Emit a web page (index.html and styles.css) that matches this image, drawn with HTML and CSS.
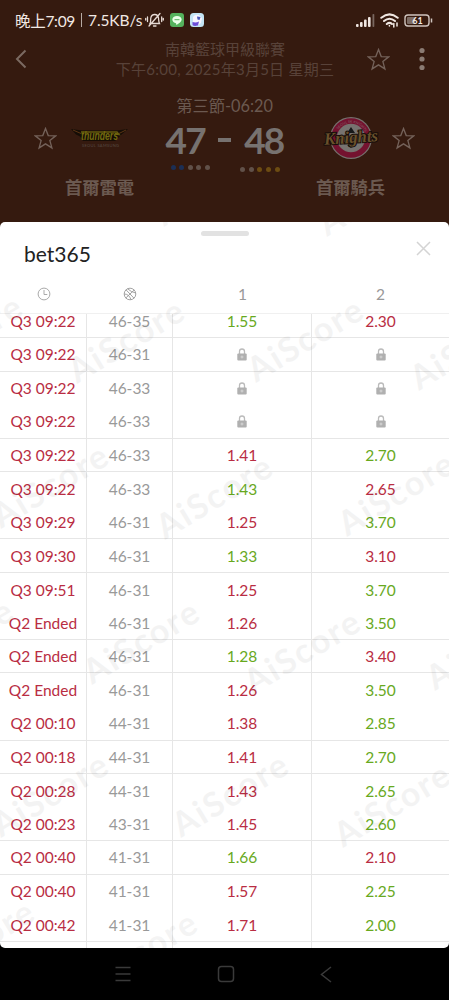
FILE: index.html
```
<!DOCTYPE html>
<html lang="zh-Hant">
<head>
    <meta charset="UTF-8" />
    <meta name="viewport" content="width=device-width, initial-scale=1.0" />
    <title>AiScore - bet365</title>
    <link rel="stylesheet" href="styles.css">
</head>
<body>
<header class="match">
    <div class="statusbar">
        <div class="status-left">
            <span class="clock">晚上7:09</span>
            <span class="divider"></span>
            <span class="speed">7.5KB/s</span>
            <svg class="mute" width="19" height="16" viewBox="0 0 19 16" fill="none" stroke="#e8dcd6" stroke-width="1.3" stroke-linecap="round">
                <path d="M5 11.5C6 10 5.500 8 5.800 6C6.200 3.500 8 2.500 9.800 2.500S13.200 4 13.500 6C13.800 8 13.500 9.500 14.500 11.500Z M8.500 14H11 M4 14L15 1.500 M2.500 5V9.500 M16.700 5V9.500 M.7 6.500V8 M18.300 6.500V8"/>
            </svg>
            <svg class="line-app" width="14" height="14" viewBox="0 0 14 14">
                <rect width="14" height="14" rx="3" fill="#55b25d"/>
                <path d="M7 3C4.200 3 2.300 4.600 2.300 6.600C2.300 8.600 4 9.800 6 10.200L6.400 12C9 10.600 11.700 8.800 11.700 6.600C11.700 4.600 9.800 3 7 3Z" fill="#e9ffe8"/>
                <path d="M4.500 6.700H9.500" stroke="#55b25d"/>
            </svg>
            <svg class="pet-app" width="14" height="14" viewBox="0 0 14 14">
                <rect width="14" height="14" rx="3.500" fill="#c3e4f4"/>
                <path d="M3 4Q5 1 9 2L12 5L11 10L7 13L3 12Z" fill="#f7f5ff"/>
                <path d="M7 3.500L10.500 4L9.500 7L7.500 6.500Z" fill="#4c58b8"/>
                <path d="M2.500 9Q6 10 9 8.500L8 12.500Q4 13.500 2.500 12Z" fill="#6c4ed8"/>
            </svg>
        </div>
        <div class="status-right">
            <svg width="19" height="13" viewBox="0 0 19 13" fill="#f0e7e2">
                <rect x="0" y="10" width="2.600" height="3" rx="1"/>
                <rect x="4" y="8" width="2.600" height="5" rx="1"/>
                <rect x="8" y="5.500" width="2.600" height="7.500" rx="1"/>
                <rect x="12" y="3" width="2.600" height="10" rx="1"/>
                <rect x="16.500" y="0" width="1.800" height="13" rx=".8" fill="#79675f"/>
            </svg>
            <svg width="19" height="15" viewBox="0 0 19 15" fill="none" stroke="#f0e7e2" stroke-width="2" stroke-linecap="round">
                <path d="M1.300 4.800Q9.500 -2 17.700 4.800 M4 8Q9.500 3.500 15 8 M6.800 11Q9.500 8.800 12 11"/>
                <path d="M9.400 12.500V13 M13.800 10.500V14 M17 10V13" stroke-width="1.500"/>
            </svg>
            <svg width="29" height="13" viewBox="0 0 29 13">
                <rect x="1" y="1" width="24" height="11" rx="3" fill="none" stroke="#cfc4be" stroke-width="1.400"/>
                <rect x="3" y="3" width="8" height="7" rx="1" fill="#7d6c64"/>
                <path d="M27.500 4.500V8.500" stroke="#cfc4be" stroke-width="1.500"/>
                <text x="13.500" y="9.800" class="battery-text">61</text>
            </svg>
        </div>
    </div>

    <div class="topbar">
        <svg class="back" width="12" height="20" viewBox="0 0 12 20"><path d="M10.500 1.500L2 10L10.500 18.500" fill="none" stroke="#7b6a61" stroke-width="2"/></svg>
        <div class="league">
            <div>南韓籃球甲級聯賽</div>
            <div class="date">下午6:00, 2025年3月5日 星期三</div>
        </div>
        <svg class="star" viewBox="0 0 22 22"><path d="M11 1.500L13.600 8.200L20.700 8.500L15.200 13L17.100 20L11 16.100L4.900 20L6.800 13L1.300 8.500L8.400 8.200Z"/></svg>
        <svg class="more" width="6" height="24" viewBox="0 0 6 24" fill="#8a7b73"><circle cx="3" cy="3.500" r="2.600"/><circle cx="3" cy="12" r="2.600"/><circle cx="3" cy="20.500" r="2.600"/></svg>
    </div>

    <div class="teams">
        <div class="team home">
            <div class="badge-row">
                <svg class="star" viewBox="0 0 22 22"><path d="M11 1.500L13.600 8.200L20.700 8.500L15.200 13L17.100 20L11 16.100L4.900 20L6.800 13L1.300 8.500L8.400 8.200Z"/></svg>
                <svg width="58" height="44" viewBox="0 0 58 44">
                    <path d="M0 13L11 14.500H46L57 13L50 19L47 22L44 25H12L9 20.500L5 18.500Z" fill="#150d06"/>
                    <path d="M2 14L10 17.500M55 14L48 17.500" stroke="#5c3413"/>
                    <path d="M10 16H46L48 18.500L44 18" fill="none" stroke="#665b0e" stroke-width="1.500"/>
                    <text x="10" y="23.500" class="thunders" textLength="37" lengthAdjust="spacingAndGlyphs">thunders</text>
                    <text x="11" y="31" class="samsung" textLength="37">SEOUL SAMSUNG</text>
                </svg>
            </div>
            <div class="name">首爾雷電</div>
        </div>
        <div class="result">
            <div class="period">第三節-06:20</div>
            <div class="score"><span>47</span><span class="dash"></span><span>48</span></div>
            <div class="fouls">
                <div class="dots"><i class="blue"></i><i class="blue"></i><i></i><i></i><i></i></div>
                <div class="dots right"><i></i><i></i><i class="gold"></i><i class="gold"></i><i class="gold"></i></div>
            </div>
        </div>
        <div class="team away">
            <div class="badge-row">
                <svg width="56" height="44" viewBox="0 0 56 44">
                    <circle cx="28" cy="22" r="21" fill="#76706d"/>
                    <circle cx="28" cy="22" r="17" fill="none" stroke="#74122f" stroke-width="5.500"/>
                    <circle cx="28" cy="22" r="13.500" fill="#777370"/>
                    <path id="arc" d="M12.800 22A15.200 15.200 0 0 1 43.200 22" fill="none"/>
                    <text class="ring-text"><textPath href="#arc" startOffset="9">SEOUL SK KNIGHTS</textPath></text>
                    <path d="M24 17L28 11L32 17ZM24 29L28 32L32 28Z" fill="#17191a"/>
                    <text x="1" y="27" class="knights" textLength="54" lengthAdjust="spacingAndGlyphs" transform="rotate(-4 28 22)">Knights</text>
                </svg>
                <svg class="star" viewBox="0 0 22 22"><path d="M11 1.500L13.600 8.200L20.700 8.500L15.200 13L17.100 20L11 16.100L4.900 20L6.800 13L1.300 8.500L8.400 8.200Z"/></svg>
            </div>
            <div class="name">首爾騎兵</div>
        </div>
    </div>
</header>

<main class="sheet">
    <div class="handle"></div>
    <div class="sheet-title">
        <h1>bet365</h1>
        <svg width="15" height="15" viewBox="0 0 15 15"><path d="M1 1L14 14M14 1L1 14" stroke="#d4d4d4" stroke-width="1.500"/></svg>
    </div>
    <div class="row head">
        <div>
            <svg width="14" height="14" viewBox="0 0 14 14" fill="none" stroke="#aaa"><circle cx="7" cy="7" r="5.900"/><path d="M7 3V7.500H10.300"/></svg>
        </div>
        <div>
            <svg width="14" height="14" viewBox="0 0 14 14" fill="none" stroke="#999" stroke-width=".9"><circle cx="7" cy="7" r="5.800"/><path d="M3 2.800L11 11.200M11.200 3L2.800 11M4.500 1.700Q8 5 12.700 6M1.300 7Q6 7 8 12.700"/></svg>
        </div>
        <div>1</div>
        <div>2</div>
    </div>
    <div class="odds">
        <div class="rows" id="rows"></div>
    </div>
    <svg class="watermark" id="watermark" width="449" height="726" viewBox="0 222 449 726"></svg>
</main>

<nav class="navbar">
    <svg width="16" height="16" viewBox="0 0 16 16"><path d="M.5 1.500H15.500M.5 8H15.500M.5 14.500H15.500"/></svg>
    <svg width="18" height="18" viewBox="0 0 18 18"><rect x="1.500" y="1.500" width="15" height="15" rx="3"/></svg>
    <svg width="12" height="17" viewBox="0 0 12 17"><path d="M11 1L1.500 8.500L11 16"/></svg>
</nav>

<script>
    // [time, score, home odds, away odds, which side went up]
    const odds = [
        ["Q3 09:22", "46-35", "1.55", "2.30", 1],
        ["Q3 09:22", "46-31"],
        ["Q3 09:22", "46-33"],
        ["Q3 09:22", "46-33"],
        ["Q3 09:22", "46-33", "1.41", "2.70", 2],
        ["Q3 09:22", "46-33", "1.43", "2.65", 1],
        ["Q3 09:29", "46-31", "1.25", "3.70", 2],
        ["Q3 09:30", "46-31", "1.33", "3.10", 1],
        ["Q3 09:51", "46-31", "1.25", "3.70", 2],
        ["Q2 Ended", "46-31", "1.26", "3.50", 2],
        ["Q2 Ended", "46-31", "1.28", "3.40", 1],
        ["Q2 Ended", "46-31", "1.26", "3.50", 2],
        ["Q2 00:10", "44-31", "1.38", "2.85", 2],
        ["Q2 00:18", "44-31", "1.41", "2.70", 2],
        ["Q2 00:28", "44-31", "1.43", "2.65", 2],
        ["Q2 00:23", "43-31", "1.45", "2.60", 2],
        ["Q2 00:40", "41-31", "1.66", "2.10", 1],
        ["Q2 00:40", "41-31", "1.57", "2.25", 2],
        ["Q2 00:42", "41-31", "1.71", "2.00", 2],
        ["", "", " ", " ", 0]
    ];

    const lock = `<svg width="10" height="13" viewBox="0 0 10 13"><path d="M2.500 6V3.500A2.500 2.500 0 0 1 7.500 3.500V6" fill="none" stroke="#bbb" stroke-width="1.300"/><rect x=".3" y="5.500" width="9.400" height="7" rx="1" fill="#b0b0b0"/><path d="M5 7.500V10.500M3.500 9H6.500" stroke="#ddd" stroke-width=".8"/></svg>`;

    document.getElementById("rows").innerHTML = odds.map(([time, score, home, away, up]) => `
        <div class="row">
            <div class="time">${time}</div>
            <div class="points">${score}</div>
            <div class="${up === 1 ? "up" : "down"}">${home || lock}</div>
            <div class="${up === 2 ? "up" : "down"}">${away || lock}</div>
        </div>`).join("");

    // background watermark
    const marks = [
        [164, 227], [327, 237], [-85, 380], [77, 384], [256, 383], [419, 391],
        [1, 529], [165, 540], [347, 537], [-94, 684], [92, 685], [253, 695], [435, 691],
        [1, 838], [181, 838], [343, 848], [-73, 985], [90, 996]
    ];
    document.getElementById("watermark").innerHTML = marks.map(([x, y]) =>
        `<text x="${x}" y="${y}" textLength="128" transform="rotate(-31 ${x} ${y})">AiScore</text>`).join("");
</script>
</body>
</html>
```
FILE: styles.css
```
* {
    box-sizing: border-box;
}
body {
    margin: 0;
    width: 449px;
    height: 1000px;
    overflow: hidden;
    display: flex;
    flex-direction: column;
    background-color: #000;
    font-family: Lato, "Noto Sans CJK TC", sans-serif;
}
svg {
    display: block;
    flex: none;
}
.match {
    height: 228px;
    flex: none;
    margin-bottom: -6px;
    background-color: #351a0f;
    color: #6b5950;
}
.statusbar {
    height: 40px;
    padding: 0 16px 0 15px;
    display: flex;
    justify-content: space-between;
    align-items: center;
    color: #f1e8e3;
    font-size: 15.5px;
}
.status-left,
.status-right {
    display: flex;
    align-items: center;
}
.clock {
    width: 60px;
    white-space: nowrap;
    letter-spacing: -0.3px;
}
.divider {
    width: 1px;
    height: 14px;
    margin: 0 6px 0 6px;
    background-color: #b7aaa3;
}
.speed {
    width: 55px;
    white-space: nowrap;
    letter-spacing: -0.1px;
}
.mute {
    margin-left: 2px;
}
.line-app {
    margin-left: 6px;
}
.pet-app {
    margin-left: 6px;
}
.status-right {
    gap: 5px;
}
.battery-text {
    font-size: 9px;
    font-weight: bold;
    text-anchor: middle;
    fill: #f1e8e3;
}
.topbar {
    height: 46px;
    display: flex;
    align-items: center;
    padding: 0 24px 8px 15px;
}
.league {
    flex: 1;
    padding-left: 86px;
    text-align: center;
    font-size: 15px;
    line-height: 20px;
    color: #584239;
    white-space: nowrap;
}
.date {
    letter-spacing: 0.25px;
}
.star {
    width: 23px;
    height: 23px;
    fill: none;
    stroke: #74625a;
    stroke-width: 1.3;
}
.topbar .star {
    margin-left: 30px;
}
.more {
    margin-left: 29px;
}
.teams {
    display: flex;
    justify-content: space-between;
    padding: 0 34px;
}
.team {
    width: 104px;
    padding-top: 30px;
}
.badge-row {
    display: flex;
    align-items: center;
    gap: 14px;
    height: 44px;
}
.away .badge-row {
    justify-content: flex-end;
    gap: 13px;
}
.name {
    margin-top: 15px;
    line-height: 26px;
    font-size: 17.3px;
    font-weight: bold;
    white-space: nowrap;
}
.home .name {
    padding-left: 31px;
}
.away .name {
    padding-left: 5px;
}
.thunders {
    font: italic bold 12px "Liberation Sans", sans-serif;
    fill: #736a0e;
}
.samsung {
    font-size: 4px;
    fill: #574a43;
}
.ring-text {
    font-size: 3.5px;
    fill: #85636a;
}
.knights {
    font: italic bold 17px "Liberation Serif", serif;
    fill: #69502a;
    stroke: #160d0a;
    stroke-width: 2px;
    paint-order: stroke;
}
.result {
    width: 124px;
    padding-top: 7px;
}
.period {
    text-align: center;
    font-size: 16.3px;
    line-height: 26px;
}
.score {
    display: flex;
    justify-content: space-between;
    align-items: center;
    height: 44px;
    margin: 0 3px 2px 3px;
    color: #777270;
    font-size: 37px;
    line-height: 40px;
    font-weight: bold;
    letter-spacing: -1.8px;
}
.score span {
    position: relative;
    top: -1px;
}
.dash {
    width: 13px;
    height: 4px;
    background-color: #777270;
}
.fouls {
    display: flex;
    justify-content: space-between;
    margin: 0 1px 0 8px;
}
.dots {
    display: flex;
    gap: 3.6px;
}
.dots i {
    width: 5px;
    height: 5px;
    border-radius: 50%;
    background-color: #615149;
}
.dots.right {
    padding-top: 2px;
    margin-right: 6px;
}
.dots .blue {
    background-color: #1c2f55;
}
.dots .gold {
    background-color: #6d4c12;
}
.sheet {
    position: relative;
    height: 726px;
    flex: none;
    overflow: hidden;
    display: flex;
    flex-direction: column;
    background-color: #fff;
    border-radius: 5px;
}
.handle {
    width: 48px;
    height: 5px;
    flex: none;
    margin: 9px auto 0;
    border-radius: 3px;
    background-color: #e2e2e2;
}
.sheet-title {
    height: 46px;
    flex: none;
    display: flex;
    justify-content: space-between;
    padding: 5px 18px 0 24px;
}
.sheet-title h1 {
    margin: 0;
    font-size: 21px;
    line-height: 25px;
    font-weight: normal;
    color: #222;
}
.row {
    display: grid;
    grid-template-columns: 87px 86px 139px 137px;
    height: 33.56px;
    font-size: 15.5px;
    border-bottom: 1px solid #e6e6e6;
}
.row > div {
    display: flex;
    align-items: center;
    justify-content: center;
    border-right: 1px solid #e6e6e6;
    white-space: pre;
}
.row > div:last-child {
    border-right: none;
}
.rows .row:nth-child(3n) {
    border-bottom: none;
}
.row.head {
    height: 32px;
    flex: none;
    padding-bottom: 7px;
    color: #999;
    border-bottom-color: #f0f0f0;
}
.row.head > div {
    border-right: none;
}
.odds {
    flex: 1;
    overflow: hidden;
}
.rows {
    margin-top: -9.6px;
}
.time,
.down {
    color: #b92d43;
}
.points {
    color: #999;
}
.up {
    color: #68a91e;
}
/* sits over the whole sheet */
.watermark {
    position: absolute;
    top: 0;
    left: 0;
    pointer-events: none;
}
.watermark text {
    font-size: 34px;
    font-weight: bold;
    fill: #000;
    opacity: 0.045;
}
.navbar {
    height: 52px;
    flex: none;
    display: flex;
    justify-content: space-between;
    align-items: center;
    padding: 0 117px 0 115px;
}
.navbar svg {
    fill: none;
    stroke: #3a3a3a;
    stroke-width: 1.5;
}
```
